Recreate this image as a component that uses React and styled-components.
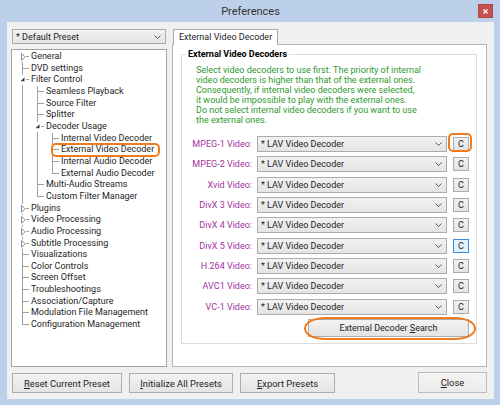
import React from "react";
import styled, { createGlobalStyle } from "styled-components";

const ROW = 11.67;

const GlobalStyle = createGlobalStyle`
  html, body { margin: 0; padding: 0; }
  body {
    font-family: Roboto, "Liberation Sans", sans-serif;
    font-size: 9px;
    color: #1e1e1e;
    background: #bcd1e9;
  }
`;

const Window = styled.div`
  width: 500px;
  height: 405px;
  box-sizing: border-box;
  background: #bcd1e9;
  display: flex;
  flex-direction: column;
  padding: 0 6px 6px 7px;
`;

const TitleBar = styled.div`
  height: 22px;
  display: grid;
  grid-template-columns: 1fr auto 1fr;
  align-items: center;
`;

const Title = styled.div`
  grid-column: 2;
  font-size: 11px;
  color: #333;
`;

const CloseX = styled.div`
  grid-column: 3;
  justify-self: end;
  align-self: start;
  margin-top: 4px;
  margin-right: 1px;
  width: 15px;
  height: 14px;
  box-sizing: border-box;
  background: #c75050;
  border: 1px solid #b44646;
  display: flex;
  align-items: center;
  justify-content: center;
`;

const Client = styled.div`
  flex: 1;
  background: #f0f0f0;
  padding: 7px 7px 6px 4px;
  display: flex;
  flex-direction: column;
`;

const Main = styled.div`
  height: 338px;
  display: flex;
  gap: 5px;
`;

const LeftCol = styled.div`
  width: 156px;
  display: flex;
  flex-direction: column;
  gap: 5px;
`;

const Combo = styled.div`
  box-sizing: border-box;
  height: ${(p) => p.$h || 15}px;
  width: ${(p) => p.$w}px;
  margin-left: ${(p) => p.$ml || 0}px;
  border: 1px solid #acacac;
  background: linear-gradient(#f2f2f2, #e4e4e4);
  display: flex;
  align-items: center;
  justify-content: space-between;
  padding: 0 4px 0 3px;
  color: #1e1e1e;
  white-space: nowrap;
`;

const Tree = styled.div`
  height: 318px;
  box-sizing: border-box;
  border: 1px solid #a3a3a3;
  background: #fff;
  padding: 1px 0 0 3px;
`;

const TreeRow = styled.div`
  height: ${ROW}px;
  display: flex;
  align-items: center;
`;

const TreeLabel = styled.span`
  position: relative;
  padding-left: 1px;
  line-height: ${ROW}px;
  white-space: nowrap;
  color: #1e1e1e;
`;

const Ring = styled.span`
  position: absolute;
  inset: ${(p) => p.$inset};
  border: 2px solid #f07a1c;
  border-radius: ${(p) => p.$radius || "5px"};
  pointer-events: none;
`;

const RightCol = styled.div`
  flex: 1;
  display: flex;
  flex-direction: column;
`;

const TabStrip = styled.div`
  height: 15px;
  padding-left: 1px;
  display: flex;
`;

const Tab = styled.div`
  position: relative;
  z-index: 1;
  height: 16px;
  box-sizing: border-box;
  border: 1px solid #acacac;
  border-bottom: none;
  background: #fff;
  padding: 0 5px;
  line-height: 14px;
  margin-bottom: -1px;
`;

const Panel = styled.div`
  flex: 1;
  box-sizing: border-box;
  border: 1px solid #b5b5b5;
  background: #fff;
  padding: 4px 9px 0 8px;
`;

const Group = styled.fieldset`
  margin: 0;
  min-width: 0;
  border: 1px solid #dcdcdc;
  padding: 0 0 6px 0;
  display: flex;
  flex-direction: column;
`;

const Legend = styled.legend`
  margin-left: 4px;
  padding: 0 2px;
  line-height: 11px;
  font-weight: bold;
  color: #000;
`;

const Note = styled.div`
  margin-top: 5px;
  padding-left: 14px;
  line-height: 10px;
  color: #2f9a2f;
  white-space: nowrap;
`;

const Rows = styled.div`
  margin-top: 9px;
`;

const Row = styled.div`
  height: 20.33px;
  display: flex;
  align-items: center;
`;

const CodecLabel = styled.span`
  width: 70px;
  text-align: right;
  color: #a032a0;
  white-space: nowrap;
`;

const SmallButton = styled.div`
  position: relative;
  margin-left: 6px;
  width: 16px;
  height: 14px;
  box-sizing: border-box;
  border: 1px solid ${(p) => (p.$focus ? "#3c8ad8" : "#acacac")};
  background: ${(p) => (p.$focus ? "#e5f1fb" : "linear-gradient(#f2f2f2, #e4e4e4)")};
  display: flex;
  align-items: center;
  justify-content: center;
  color: #1e1e1e;
`;

const SearchButton = styled.div`
  position: relative;
  align-self: flex-end;
  margin: 2px 7px 0 0;
  width: 161px;
  height: 18px;
  box-sizing: border-box;
  border: 1px solid #acacac;
  background: linear-gradient(#f2f2f2, #e4e4e4);
  display: flex;
  align-items: center;
  justify-content: center;
`;

const Footer = styled.div`
  margin-top: 6px;
  height: 20px;
  padding-left: 1px;
  display: flex;
  gap: 7px;
  font-size: 9.4px;
`;

const Button = styled.div`
  width: ${(p) => p.$w}px;
  margin-left: ${(p) => (p.$push ? "auto" : "0")};
  margin-top: ${(p) => (p.$push ? "-1px" : "0")};
  box-sizing: border-box;
  border: 1px solid ${(p) => (p.$push ? "#bdbdbd" : "#acacac")};
  background: ${(p) => (p.$push ? "linear-gradient(#f4f4f4, #ebebeb)" : "linear-gradient(#f2f2f2, #e4e4e4)")};
  display: flex;
  align-items: center;
  justify-content: center;
  color: #1e1e1e;
  white-space: nowrap;
`;

const Chevron = () => (
  <svg width="7" height="4" viewBox="0 0 7 4">
    <path d="M0.5 0.5 L3.5 3.5 L6.5 0.5" stroke="#555" fill="none" />
  </svg>
);

const Guide = ({ kind, expander }) => {
  const c = ROW / 2;
  return (
    <svg width="15" height={ROW} viewBox={`0 0 15 ${ROW}`} style={{ flex: "none" }}>
      <g stroke="#a0a0a0" strokeWidth="1" shapeRendering="crispEdges">
        {kind === "pipe" && <line x1="7.5" y1="0" x2="7.5" y2={ROW} />}
        {kind === "tee" && <line x1="7.5" y1="0" x2="7.5" y2={ROW} />}
        {kind === "elbow" && <line x1="7.5" y1="0" x2="7.5" y2={c} />}
        {kind === "first" && <line x1="7.5" y1={c} x2="7.5" y2={ROW} />}
        {kind !== "pipe" && <line x1="7.5" y1={c} x2="14" y2={c} />}
      </g>
      {expander && <rect x="4" y={c - 5} width="7" height="10" fill="#fff" />}
      {expander === "closed" && (
        <polygon points={`6.5,${c - 3.5} 10,${c} 6.5,${c + 3.5}`} fill="#fff" stroke="#8a8a8a" strokeWidth="1" />
      )}
      {expander === "open" && (
        <polygon points={`9.5,${c - 2.5} 9.5,${c + 1.5} 5.5,${c + 1.5}`} fill="#3a3a3a" />
      )}
    </svg>
  );
};

const tree = [
  { label: "General", g: ["first"], exp: "closed" },
  { label: "DVD settings", g: ["tee"] },
  { label: "Filter Control", g: ["tee"], exp: "open" },
  { label: "Seamless Playback", g: ["pipe", "tee"] },
  { label: "Source Filter", g: ["pipe", "tee"] },
  { label: "Splitter", g: ["pipe", "tee"] },
  { label: "Decoder Usage", g: ["pipe", "tee"], exp: "open" },
  { label: "Internal Video Decoder", g: ["pipe", "pipe", "tee"] },
  { label: "External Video Decoder", g: ["pipe", "pipe", "tee"], marked: true },
  { label: "Internal Audio Decoder", g: ["pipe", "pipe", "tee"] },
  { label: "External Audio Decoder", g: ["pipe", "pipe", "elbow"] },
  { label: "Multi-Audio Streams", g: ["pipe", "tee"] },
  { label: "Custom Filter Manager", g: ["pipe", "elbow"] },
  { label: "Plugins", g: ["tee"], exp: "closed" },
  { label: "Video Processing", g: ["tee"], exp: "closed" },
  { label: "Audio Processing", g: ["tee"], exp: "closed" },
  { label: "Subtitle Processing", g: ["tee"], exp: "closed" },
  { label: "Visualizations", g: ["tee"] },
  { label: "Color Controls", g: ["tee"] },
  { label: "Screen Offset", g: ["tee"] },
  { label: "Troubleshootings", g: ["tee"] },
  { label: "Association/Capture", g: ["tee"] },
  { label: "Modulation File Management", g: ["tee"] },
  { label: "Configuration Management", g: ["elbow"] },
];

const codecs = [
  "MPEG-1 Video:",
  "MPEG-2 Video:",
  "Xvid Video:",
  "DivX 3 Video:",
  "DivX 4 Video:",
  "DivX 5 Video:",
  "H.264 Video:",
  "AVC1 Video:",
  "VC-1 Video:",
];

const note = [
  "Select video decoders to use first. The priority of internal",
  "video decoders is higher than that of the external ones.",
  "Consequently, if internal video decoders were selected,",
  "it would be impossible to play with the external ones.",
  "Do not select internal video decoders if you want to use",
  "the external ones.",
];

export default function App() {
  return (
    <>
      <GlobalStyle />
      <Window>
        <TitleBar>
          <Title>Preferences</Title>
          <CloseX>
            <svg width="5" height="5" viewBox="0 0 5 5">
              <path d="M0.5 0.5 L4.5 4.5 M4.5 0.5 L0.5 4.5" stroke="#fff" strokeWidth="1.3" />
            </svg>
          </CloseX>
        </TitleBar>
        <Client>
          <Main>
            <LeftCol>
              <Combo $w={154} $ml={1}>
                <span>* Default Preset</span>
                <Chevron />
              </Combo>
              <Tree>
                {tree.map((item) => (
                  <TreeRow key={item.label}>
                    {item.g.map((kind, i) => (
                      <Guide key={i} kind={kind} expander={i === item.g.length - 1 ? item.exp : undefined} />
                    ))}
                    <TreeLabel>
                      {item.label}
                      {item.marked && <Ring $inset="-1px -6px -1px -9px" />}
                    </TreeLabel>
                  </TreeRow>
                ))}
              </Tree>
            </LeftCol>
            <RightCol>
              <TabStrip>
                <Tab>External Video Decoder</Tab>
              </TabStrip>
              <Panel>
                <Group>
                  <Legend>External Video Decoders</Legend>
                  <Note>
                    {note.map((line) => (
                      <div key={line}>{line}</div>
                    ))}
                  </Note>
                  <Rows>
                    {codecs.map((name, i) => (
                      <Row key={name}>
                        <CodecLabel>{name}</CodecLabel>
                        <Combo $w={190} $h={16} $ml={5}>
                          <span>* LAV Video Decoder</span>
                          <Chevron />
                        </Combo>
                        <SmallButton $focus={i === 5}>
                          C
                          {i === 0 && <Ring $inset="-5px -4px -2px -6px" />}
                        </SmallButton>
                      </Row>
                    ))}
                  </Rows>
                  <SearchButton>
                    <span>
                      External Decoder <u>S</u>earch
                    </span>
                    <Ring $inset="-3px -8px -4px -5px" $radius="22px / 12px" />
                  </SearchButton>
                </Group>
              </Panel>
            </RightCol>
          </Main>
          <Footer>
            <Button $w={110}>
              <span><u>R</u>eset Current Preset</span>
            </Button>
            <Button $w={104}>
              <span><u>I</u>nitialize All Presets</span>
            </Button>
            <Button $w={95}>
              <span><u>E</u>xport Presets</span>
            </Button>
            <Button $w={69} $push>
              <span><u>C</u>lose</span>
            </Button>
          </Footer>
        </Client>
      </Window>
    </>
  );
}
